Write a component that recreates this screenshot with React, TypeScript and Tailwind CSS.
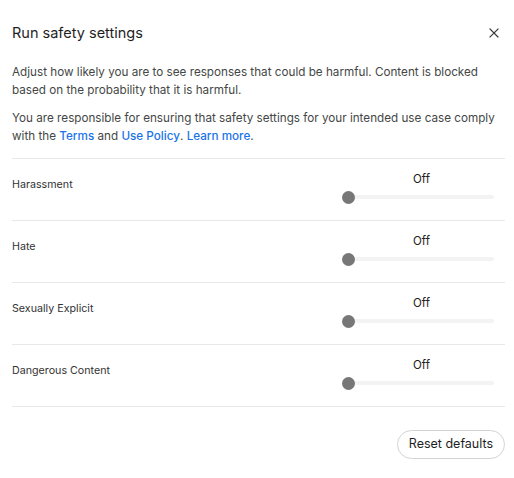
import React, { useState } from "react"

type Category = {
	name: string
	level: number
}

const levels = ["Off", "Block few", "Block some", "Block most"]

const initial: Category[] = [
	{ name: "Harassment", level: 0 },
	{ name: "Hate", level: 0 },
	{ name: "Sexually Explicit", level: 0 },
	{ name: "Dangerous Content", level: 0 },
]

const CloseIcon = () => (
	<svg width="10" height="10" viewBox="0 0 10 10" fill="none">
		<path d="M1 1L9 9M9 1L1 9" stroke="#3c3c3c" strokeWidth="1.2" strokeLinecap="square" />
	</svg>
)

const Slider = ({ value }: { value: number }) => {
	const pct = (value / (levels.length - 1)) * 100
	return (
		<div className="relative h-[13px] w-full">
			<div className="absolute left-[7px] right-0 top-[4px] h-[4px] rounded-full bg-[#f3f3f3]" />
			<div
				className="absolute top-0 h-[13px] w-[13px] rounded-full bg-[#777777]"
				style={{ left: `calc(${pct}% * (145 / 152))` }}
			/>
		</div>
	)
}

const Row = ({ item }: { item: Category }) => (
	<div className="flex h-[62px] items-start border-b border-[#e8e8e8]">
		<div className="mt-[18px] text-[10.7px] leading-[16px] text-[#333333]">{item.name}</div>
		<div className="ml-auto flex w-[163px] flex-col pr-[11px] pt-[12px]">
			<div className="pl-[7px] text-center text-[11.5px] leading-[16px] text-[#222222]">
				{levels[item.level]}
			</div>
			<div className="mt-[4px]">
				<Slider value={item.level} />
			</div>
		</div>
	</div>
)

export default function App() {
	const [items, setItems] = useState(initial)

	return (
		<div className="min-h-[478px] w-[514px] bg-white pl-3 pr-[9px] pt-[22px] font-['Inter',sans-serif]">
			<div className="flex items-center justify-between">
				<h2 className="text-[14.5px] leading-[22px] text-[#1f1f1f]">Run safety settings</h2>
				<button type="button" aria-label="Close" className="mr-[1px] flex h-5 w-5 items-center justify-center">
					<CloseIcon />
				</button>
			</div>

			<p className="mt-[19px] text-[11.7px] leading-[18px] text-[#444746]">
				Adjust how likely you are to see responses that could be harmful. Content is blocked based on the
				probability that it is harmful.
			</p>
			<p className="mt-[10px] text-[11.7px] leading-[18px] text-[#444746]">
				You are responsible for ensuring that safety settings for your intended use case comply with the{" "}
				<a className="font-medium text-[#1a73e8]">Terms</a> and{" "}
				<a className="font-medium text-[#1a73e8]">Use Policy</a>.{" "}
				<a className="font-medium text-[#1a73e8]">Learn more</a>.
			</p>

			<div className="mt-[13px] border-t border-[#e8e8e8]">
				{items.map((item) => (
					<Row key={item.name} item={item} />
				))}
			</div>

			<div className="mt-[23px] flex justify-end">
				<button
					type="button"
					onClick={() => setItems(initial)}
					className="h-[29px] rounded-full border border-[#d3d3d3] px-[11px] text-[12.5px] text-[#1f1f1f]"
				>
					Reset defaults
				</button>
			</div>
		</div>
	)
}
